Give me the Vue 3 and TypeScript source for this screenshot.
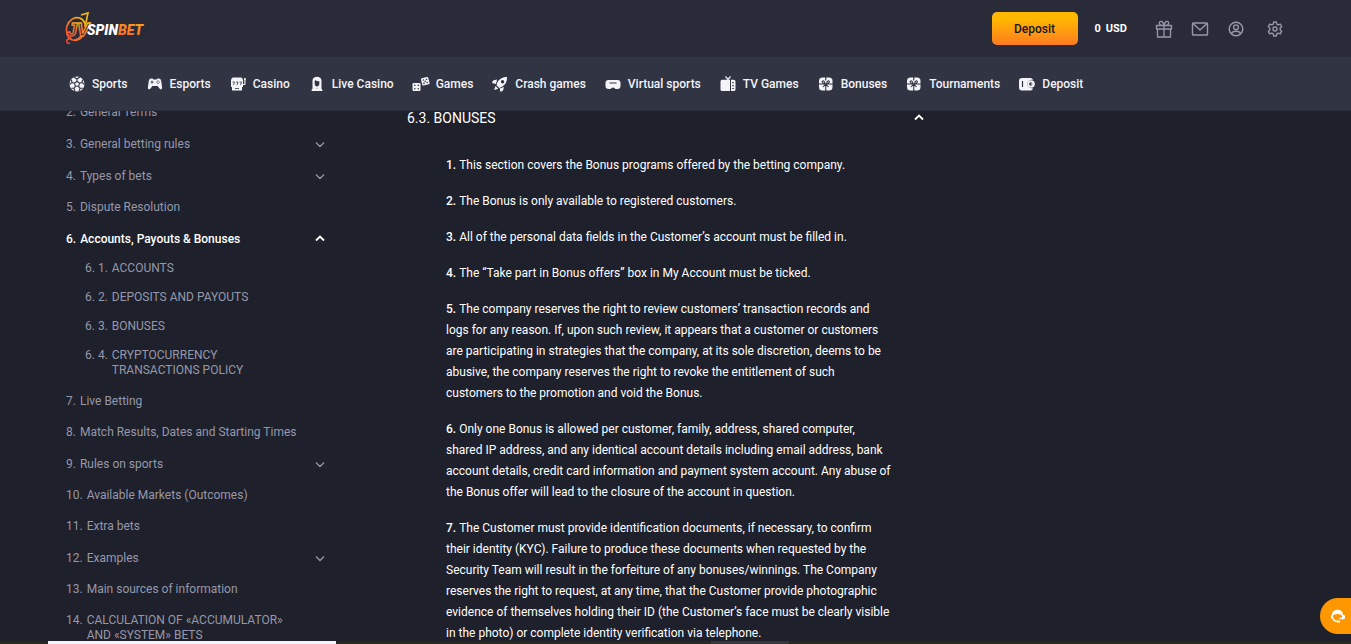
<script setup lang="ts">
import { ref } from 'vue'

interface NavItem { label: string; icon: string }
interface Section { n: string; title: string; expandable?: boolean; open?: boolean; children?: { n: string; title: string }[] }

const nav: NavItem[] = [
  { label: 'Sports', icon: 'ball' },
  { label: 'Esports', icon: 'pad' },
  { label: 'Casino', icon: 'slot' },
  { label: 'Live Casino', icon: 'dealer' },
  { label: 'Games', icon: 'dice' },
  { label: 'Crash games', icon: 'rocket' },
  { label: 'Virtual sports', icon: 'vr' },
  { label: 'TV Games', icon: 'tv' },
  { label: 'Bonuses', icon: 'bonus' },
  { label: 'Tournaments', icon: 'bonus' },
  { label: 'Deposit', icon: 'wallet' },
]

const sections = ref<Section[]>([
  { n: '2.', title: 'General Terms' },
  { n: '3.', title: 'General betting rules', expandable: true },
  { n: '4.', title: 'Types of bets', expandable: true },
  { n: '5.', title: 'Dispute Resolution' },
  {
    n: '6.', title: 'Accounts, Payouts & Bonuses', expandable: true, open: true,
    children: [
      { n: '6. 1.', title: 'ACCOUNTS' },
      { n: '6. 2.', title: 'DEPOSITS AND PAYOUTS' },
      { n: '6. 3.', title: 'BONUSES' },
      { n: '6. 4.', title: 'CRYPTOCURRENCY TRANSACTIONS POLICY' },
    ],
  },
  { n: '7.', title: 'Live Betting' },
  { n: '8.', title: 'Match Results, Dates and Starting Times' },
  { n: '9.', title: 'Rules on sports', expandable: true },
  { n: '10.', title: 'Available Markets (Outcomes)' },
  { n: '11.', title: 'Extra bets' },
  { n: '12.', title: 'Examples', expandable: true },
  { n: '13.', title: 'Main sources of information' },
  { n: '14.', title: 'CALCULATION OF «ACCUMULATOR» AND «SYSTEM» BETS' },
])

const rules: string[][] = [
  ['This section covers the Bonus programs offered by the betting company.'],
  ['The Bonus is only available to registered customers.'],
  ['All of the personal data fields in the Customer’s account must be filled in.'],
  ['The “Take part in Bonus offers” box in My Account must be ticked.'],
  [
    'The company reserves the right to review customers’ transaction records and',
    'logs for any reason. If, upon such review, it appears that a customer or customers',
    'are participating in strategies that the company, at its sole discretion, deems to be',
    'abusive, the company reserves the right to revoke the entitlement of such',
    'customers to the promotion and void the Bonus.',
  ],
  [
    'Only one Bonus is allowed per customer, family, address, shared computer,',
    'shared IP address, and any identical account details including email address, bank',
    'account details, credit card information and payment system account. Any abuse of',
    'the Bonus offer will lead to the closure of the account in question.',
  ],
  [
    'The Customer must provide identification documents, if necessary, to confirm',
    'their identity (KYC). Failure to produce these documents when requested by the',
    'Security Team will result in the forfeiture of any bonuses/winnings. The Company',
    'reserves the right to request, at any time, that the Customer provide photographic',
    'evidence of themselves holding their ID (the Customer’s face must be clearly visible',
    'in the photo) or complete identity verification via telephone.',
  ],
]

const articleOpen = ref(true)
</script>

<template>
  <div class="page">
    <header class="header">
      <div class="topbar">
        <a class="logo" href="#" aria-label="JV Spinbet">
          <svg width="80" height="34" viewBox="0 0 80 34">
            <defs>
              <linearGradient id="emblem" x1="0" y1="1" x2="0.6" y2="0">
                <stop offset="0" stop-color="#f5413a" />
                <stop offset="0.5" stop-color="#f77a2b" />
                <stop offset="1" stop-color="#fbb813" />
              </linearGradient>
              <linearGradient id="word" x1="0" y1="1" x2="1" y2="0">
                <stop offset="0" stop-color="#f4432f" />
                <stop offset="1" stop-color="#fba51b" />
              </linearGradient>
            </defs>
            <ellipse cx="11" cy="17" rx="9.500" ry="11.500" fill="none" stroke="url(#emblem)" stroke-width="1.600" transform="rotate(18 11 17)" />
            <path d="M5 31Q1 32 2 28L6 25M16 3L23 1L20 15M18 21Q15 27 9 28" fill="none" stroke="url(#emblem)" stroke-width="1.600" />
            <text class="emblem" x="2" y="24">JV</text>
            <text class="word" x="22" y="23">SPIN<tspan fill="url(#word)">BET</tspan></text>
          </svg>
        </a>
        <div class="account">
          <button class="deposit" type="button">Deposit</button>
          <span class="balance"><span>0</span><span>USD</span></span>
          <div class="tools">
            <button type="button" aria-label="Gifts">
              <svg width="18" height="18" viewBox="0 0 18 18" fill="none" stroke="currentColor" stroke-width="1.300" stroke-linejoin="round">
                <path d="M1.500 5.500h15v3.500h-15zM2.500 9h13v8h-13zM9 5.500V17M9 5.500C5.500 5.500 4 4.300 4.300 2.700C4.700.7 8 .4 9 5.500C10 .4 13.300.7 13.700 2.700C14 4.300 12.500 5.500 9 5.500z" />
              </svg>
            </button>
            <button type="button" aria-label="Messages">
              <svg width="18" height="18" viewBox="0 0 18 18" fill="none" stroke="currentColor" stroke-width="1.400" stroke-linejoin="round">
                <rect x="1.500" y="3" width="15" height="12" rx="0.800" /><path d="M2 3.500L9 10L16 3.500" />
              </svg>
            </button>
            <button type="button" aria-label="Profile">
              <svg width="18" height="18" viewBox="0 0 18 18" fill="none" stroke="currentColor" stroke-width="1.400">
                <circle cx="9" cy="9" r="6.800" /><circle cx="9" cy="7.300" r="2.400" /><path d="M4.500 13.800C5 11.500 6.700 11.200 9 11.200S13 11.500 13.500 13.800" />
              </svg>
            </button>
            <button class="settings" type="button" aria-label="Settings">
              <svg width="18" height="18" viewBox="0 0 18 18" fill="none" stroke="currentColor" stroke-width="1.400" stroke-linejoin="round">
                <path d="M7.700 2h2.600l.5 2.100 1.400.8 2.100-.8 1.400 2.400-1.500 1.600v1.800l1.500 1.600-1.400 2.400-2.100-.8-1.400.8-.5 2.100H7.700l-.5-2.100-1.400-.8-2.100.8-1.400-2.400 1.500-1.600V8.100L2.300 6.500l1.400-2.400 2.100.8 1.400-.8z" /><circle cx="9" cy="9" r="2" />
              </svg>
            </button>
          </div>
        </div>
      </div>
      <nav class="nav" aria-label="Main">
        <a v-for="item in nav" :key="item.label" class="nav-link" href="#">
          <svg width="18" height="18" viewBox="0 0 18 18" fill="currentColor" aria-hidden="true">
            <template v-if="item.icon === 'ball'">
              <circle cx="9" cy="9" r="7.500" />
              <g fill="none" stroke="#313442" stroke-width="1.100">
                <path d="M9 6.300l2.600 1.900-1 3.100H7.400l-1-3.100zM9 6.300V4M11.600 8.200l2.300-.8M10.600 11.300l1.500 2M7.400 11.300l-1.500 2M6.400 8.200l-2.300-.8M6 2l3 2 3-2M14.800 4.700l-.9 2.700L16.500 9.500M14.600 13.200l-2.500.1L11 16M7 16l-1.100-2.700-2.500-.1M1.500 9.500l2.600-2.100-.9-2.700" />
              </g>
            </template>
            <template v-else-if="item.icon === 'pad'">
              <path d="M5.200 3.500h1.300l1 1h3l1-1h1.300c1.300 0 2 .8 2.400 2.500l.9 6.300c.2 2.300-1.500 2.600-2.600 1.200L11.600 11H6.400l-1.900 2.500c-1.100 1.400-2.800 1.100-2.600-1.200L2.800 6c.4-1.700 1.100-2.500 2.400-2.500z" />
              <path d="M6 5.700v2.800M4.600 7.100h2.800" stroke="#313442" stroke-width=".9" /><g fill="#313442"><circle cx="12" cy="5.900" r=".6" /><circle cx="12" cy="8.300" r=".6" /><circle cx="10.800" cy="7.100" r=".6" /><circle cx="13.200" cy="7.100" r=".6" /></g>
            </template>
            <template v-else-if="item.icon === 'slot'">
              <path d="M4 2.500h8q1.500 0 1.500 1.500v1H2.500V4Q2.500 2.500 4 2.500zM2 4.500h12v7.500H2zM3 11.500h10v4H3zM14 9h1.300V4.500h1.200V9q0 1-1 1H14z" /><circle cx="15.900" cy="4" r="1.100" />
              <g fill="none" stroke="#313442" stroke-width=".8"><path d="M3.500 7h2L4.500 10M7 7h2L8 10M10.500 7h2l-1 3M6 13.500h4" /></g>
            </template>
            <template v-else-if="item.icon === 'dealer'">
              <path fill-rule="evenodd" d="M4.500 13V5.500C4.500.500 13.500.500 13.500 5.500V13zM6.700 6v3c0 3.300 4.600 3.300 4.600 0V6C9.500 6.500 8 6 7.500 5z" /><path d="M3.500 16c0-2.500 1.500-3.500 4-3.500l1.500 1 1.500-1c2.500 0 4 1 4 3.500z" />
            </template>
            <template v-else-if="item.icon === 'dice'">
              <rect x="0.500" y="8" width="8" height="8" rx="1.200" /><rect x="9.500" y="2.500" width="7.500" height="7.500" rx="1.200" transform="rotate(-15 13.200 6.200)" />
              <g fill="#313442"><circle cx="2.800" cy="10.300" r=".8" /><circle cx="6.300" cy="10.300" r=".8" /><circle cx="2.800" cy="13.700" r=".8" /><circle cx="6.300" cy="13.700" r=".8" /><circle cx="11.300" cy="5" r=".8" /><circle cx="14.500" cy="4.200" r=".8" /><circle cx="13.200" cy="6.300" r=".8" /><circle cx="12" cy="8.400" r=".8" /><circle cx="15.200" cy="7.500" r=".8" /></g>
            </template>
            <template v-else-if="item.icon === 'rocket'">
              <path fill-rule="evenodd" d="M16 2c.3 4.500-1.500 7.500-5 9.800L8.300 13 5.500 10.200 6.500 7C9 3.500 11.500 2 16 2zM11.500 5a1.700 1.700 0 1 0 .1 3.400A1.700 1.700 0 0 0 11.500 5z" /><path d="M6 4.500L2 5.500 1 8l4 1zM13 12l-1 3.500L9.500 17l-.8-3.500zM4.500 11l2.800 2.700L3 15z" />
            </template>
            <template v-else-if="item.icon === 'vr'">
              <path fill-rule="evenodd" d="M4 5h10Q16.500 5.300 16.500 7.500v3.500q0 3-3 3h-2Q10.500 12.500 9 12.500T6.500 14h-2q-3 0-3-3V7.500Q1.500 5.300 4 5zM5.500 7.500v1.100h7V7.500z" />
            </template>
            <template v-else-if="item.icon === 'tv'">
              <path fill-rule="evenodd" d="M1.500 6.500Q1.500 5 3 4.800h8V16H3q-1.500 0-1.500-1.500zM12 4.800h2.500q2 0 2 1.700v8q0 1.500-2 1.500H12zM13.300 7v1.300h1.500V7zm0 3v1.300h1.500V10zm0 3v1h1.500v-1z" /><path d="M6.500 1.500l2.500 3 2.500-3" fill="none" stroke="currentColor" stroke-width="1.200" />
            </template>
            <template v-else-if="item.icon === 'bonus'">
              <rect x="2" y="2.500" width="13.500" height="13" rx="3.500" />
              <g fill="none" stroke="#313442" stroke-width="1.100"><path d="M8.750 2v3.500M8.750 9v7M1.500 9H16M8 8.500C4.500 8.500 4.500 5.800 6.300 5.800Q7.500 6 8 8.500M9.500 8.500C13 8.500 13 5.800 11.200 5.800Q10 6 9.500 8.500M8.750 9L6 12M8.750 9L11.500 12" /></g>
            </template>
            <template v-else>
              <path d="M4 3h8.500q2 0 2.500 2-4-1-5.500 2.500T12.500 13l2.500.5Q14.500 15.500 12.500 15.500H4q-3 0-3-3v-6.500Q1 3 4 3z" /><path d="M4.500 6v6" stroke="#313442" stroke-width="1.200" /><circle cx="13" cy="9" r="3.800" /><circle cx="12.800" cy="9" r="1.700" fill="#313442" /><path d="M12.800 9h2" stroke="currentColor" />
            </template>
          </svg>
          <span>{{ item.label }}</span>
        </a>
      </nav>
    </header>

    <main class="content">
      <aside class="sidebar">
        <ul class="sections">
          <li v-for="s in sections" :key="s.n">
            <button v-if="s.expandable" class="row expandable" :class="{ open: s.open }" type="button" :aria-expanded="!!s.open" @click="s.open = !s.open">
              <span>{{ s.n }}</span><span class="title">{{ s.title }}</span>
              <svg class="chevron" width="10" height="10" viewBox="0 0 10 10" fill="none" stroke="currentColor"><path d="M1 3.500L5 7.500L9 3.500" /></svg>
            </button>
            <a v-else class="row" href="#"><span>{{ s.n }}</span><span class="title">{{ s.title }}</span></a>
            <ul v-if="s.children && s.open" class="children">
              <li v-for="c in s.children" :key="c.n"><a class="sub" href="#"><span>{{ c.n }}</span><span class="title">{{ c.title }}</span></a></li>
            </ul>
          </li>
        </ul>
      </aside>

      <article class="article">
        <h2>
          <button class="heading" :class="{ open: articleOpen }" type="button" :aria-expanded="articleOpen" @click="articleOpen = !articleOpen">
            <span>6.3. BONUSES</span>
            <svg class="chevron" width="10" height="10" viewBox="0 0 10 10" fill="none" stroke="currentColor"><path d="M1 3.500L5 7.500L9 3.500" /></svg>
          </button>
        </h2>
        <div v-if="articleOpen" class="rules">
          <p v-for="(lines, i) in rules" :key="i">
            <span v-for="(line, j) in lines" :key="j" class="line"><b v-if="j === 0">{{ i + 1 }}. </b>{{ line }}</span>
          </p>
        </div>
      </article>
    </main>

    <div class="dock"><span class="tab"></span><span class="thumb"></span></div>
    <button class="chat" type="button" aria-label="Support chat">
      <svg width="16" height="16" viewBox="0 0 16 16" fill="none">
        <path d="M2 8V7C2 0 13 0 13 7v1.500L10.500 6.500Q7.500 5.500 4.500 6.500z" fill="#fff" /><path d="M2 7.500C2.500 12 5 13.500 8 13.500M13 7.500v3H9.500" stroke="#fff" stroke-width="1.500" /><rect x="12" y="7" width="3" height="4" rx="1" fill="#fff" /><rect x="1" y="7" width="2" height="3.500" rx="1" fill="#fff" /><path d="M7 12.500h3v2H7z" fill="#fff" />
      </svg>
    </button>
  </div>
</template>

<style>
html, body { background: #1e202b; }
</style>

<style scoped>
.page { position: relative; height: 100vh; overflow: hidden; background: #1e202b; color: #fff; font-family: Roboto, "Liberation Sans", sans-serif; font-size: 12px; }
.page * { box-sizing: border-box; }
button { margin: 0; padding: 0; border: 0; background: none; color: inherit; font: inherit; cursor: pointer; }
a { color: inherit; text-decoration: none; }
ul { margin: 0; padding: 0; list-style: none; }
.header { position: fixed; top: 0; left: 0; right: 0; z-index: 2; }
.topbar { display: flex; align-items: center; justify-content: space-between; height: 57px; padding: 0 67px 0 65px; background: #292c38; }
.logo svg { display: block; overflow: visible; }
.emblem { font: italic 700 18px "Liberation Sans Narrow", "Liberation Sans", sans-serif; fill: #292c38; stroke: url(#emblem); stroke-width: 1.3px; }
.word { font: italic 900 14px "Liberation Sans Narrow", Roboto, sans-serif; fill: #fff; }
.account { display: flex; align-items: center; }
.deposit { width: 86px; height: 33px; border-radius: 5px; background: linear-gradient(#ffb800 20%, #ff7b22); color: #15161c; font-weight: 500; }
.balance { display: flex; gap: 5px; margin-left: 17px; font-size: 11px; font-weight: 700; }
.tools { display: flex; align-items: center; gap: 18px; margin-left: 28px; color: #9698aa; }
.tools button { width: 18px; height: 18px; }
.tools svg { display: block; }
.tools .settings { margin-left: 3px; }
.nav { display: flex; align-items: center; gap: 18px; height: 54px; padding: 0 68px; background: #313442; border-bottom: 1px solid #2c2f3b; }
.nav-link { display: flex; align-items: center; gap: 6px; color: #f3f3f8; font-weight: 500; white-space: nowrap; }
.content { display: flex; align-items: flex-start; gap: 82px; padding: 97px 66px 0; }
.sidebar { flex: 0 0 259px; color: #9698aa; }
.row { display: flex; gap: 4px; width: 100%; padding: 8px 0; line-height: 15px; text-align: left; }
.title { flex: 1; }
.row .title { max-width: 220px; }
.expandable { align-items: center; height: 32px; }
.chevron { flex: none; margin-left: auto; stroke-width: 1.3px; }
.open { color: #fff; font-weight: 500; }
.open .chevron { transform: rotate(180deg); stroke-width: 1.8px; }
.children { display: flex; flex-direction: column; gap: 14px; padding: 6px 0 8px 19px; }
.sub { display: flex; gap: 4px; line-height: 15px; }
.sub .title { max-width: 150px; }
.article { flex: 0 1 517px; }
h2 { margin: 0; font: inherit; }
.heading { display: flex; align-items: center; justify-content: space-between; width: 100%; height: 41px; font-size: 14px; font-weight: 400; }
.rules { padding: 17px 0 0 39px; line-height: 21px; }
.rules p { margin: 0 0 15px; }
.line { display: block; }
.rules b { font-weight: 500; white-space: pre; }
.dock { position: fixed; left: 0; right: 0; bottom: 0; z-index: 3; display: flex; gap: 375px; height: 3px; padding-left: 48px; background: #29291f; }
.tab { width: 288px; background: #f4f4f4; }
.thumb { width: 78px; background: #383838; }
.chat { position: fixed; right: -5px; bottom: 10px; z-index: 4; display: flex; align-items: center; justify-content: center; width: 36px; height: 36px; border-radius: 18px 0 0 18px; background: #ff9800; }
</style>
